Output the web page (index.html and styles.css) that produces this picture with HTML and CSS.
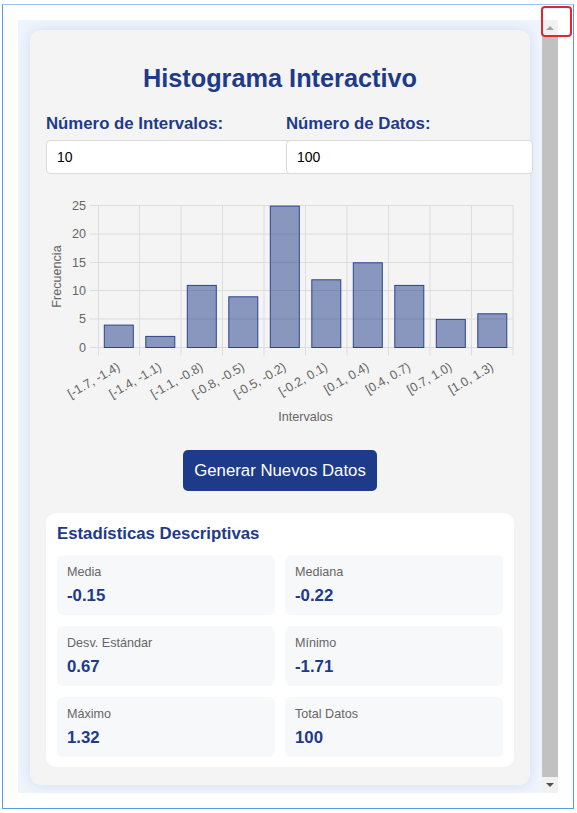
FILE: index.html
```html
<!DOCTYPE html>
<html lang="es">
<head>
<meta charset="utf-8">
<title>Histograma Interactivo</title>
<link rel="stylesheet" href="styles.css">
</head>
<body>
<div class="frame">
  <div class="viewport">
    <div class="content">
      <div class="card">
        <h1 class="title">Histograma Interactivo</h1>
        <div class="controls">
          <div class="field">
            <label class="field-label" for="bins">Número de Intervalos:</label>
            <input class="field-input" id="bins" type="text" value="10">
          </div>
          <div class="field">
            <label class="field-label" for="count">Número de Datos:</label>
            <input class="field-input" id="count" type="text" value="100">
          </div>
        </div>
        <svg class="chart" width="468" height="245" viewBox="0 0 468 245" xmlns="http://www.w3.org/2000/svg">
          <g stroke="#dcdcdc" stroke-width="1">
            <line x1="44" y1="16.5" x2="467" y2="16.5"/>
            <line x1="44" y1="45" x2="467" y2="45"/>
            <line x1="44" y1="73.5" x2="467" y2="73.5"/>
            <line x1="44" y1="101.5" x2="467" y2="101.5"/>
            <line x1="44" y1="130" x2="467" y2="130"/>
            <line x1="44" y1="158.5" x2="467" y2="158.5"/>
            <line x1="52.5" y1="16.5" x2="52.5" y2="166.5"/>
            <line x1="93.5" y1="16.5" x2="93.5" y2="166.5"/>
            <line x1="135" y1="16.5" x2="135" y2="166.5"/>
            <line x1="176.5" y1="16.5" x2="176.5" y2="166.5"/>
            <line x1="218" y1="16.5" x2="218" y2="166.5"/>
            <line x1="259.5" y1="16.5" x2="259.5" y2="166.5"/>
            <line x1="301" y1="16.5" x2="301" y2="166.5"/>
            <line x1="342.5" y1="16.5" x2="342.5" y2="166.5"/>
            <line x1="384" y1="16.5" x2="384" y2="166.5"/>
            <line x1="425.5" y1="16.5" x2="425.5" y2="166.5"/>
            <line x1="467" y1="16.5" x2="467" y2="166.5"/>
          </g>
          <g fill="rgba(30,58,138,0.5)" stroke="#2a4390" stroke-width="1">
            <rect x="58.3" y="136.1" width="29" height="22.4"/>
            <rect x="99.8" y="147.4" width="29" height="11.1"/>
            <rect x="141.3" y="96.4" width="29" height="62.1"/>
            <rect x="182.8" y="107.8" width="29" height="50.7"/>
            <rect x="224.3" y="17.1" width="29" height="141.4"/>
            <rect x="265.8" y="90.8" width="29" height="67.7"/>
            <rect x="307.3" y="73.8" width="29" height="84.7"/>
            <rect x="348.8" y="96.4" width="29" height="62.1"/>
            <rect x="390.3" y="130.4" width="29" height="28.1"/>
            <rect x="431.8" y="124.8" width="29" height="33.7"/>
          </g>
          <g class="tick" text-anchor="end">
            <text x="40" y="21">25</text>
            <text x="40" y="49.4">20</text>
            <text x="40" y="77.7">15</text>
            <text x="40" y="106">10</text>
            <text x="40" y="134.4">5</text>
            <text x="40" y="162.7">0</text>
          </g>
          <g class="tick" text-anchor="end">
            <text dy="0.35em" transform="translate(72.75 176.5) rotate(-30)">[-1.7, -1.4)</text>
            <text dy="0.35em" transform="translate(114.25 176.5) rotate(-30)">[-1.4, -1.1)</text>
            <text dy="0.35em" transform="translate(155.75 176.5) rotate(-30)">[-1.1, -0.8)</text>
            <text dy="0.35em" transform="translate(197.25 176.5) rotate(-30)">[-0.8, -0.5)</text>
            <text dy="0.35em" transform="translate(238.75 176.5) rotate(-30)">[-0.5, -0.2)</text>
            <text dy="0.35em" transform="translate(280.25 176.5) rotate(-30)">[-0.2, 0.1)</text>
            <text dy="0.35em" transform="translate(321.75 176.5) rotate(-30)">[0.1, 0.4)</text>
            <text dy="0.35em" transform="translate(363.25 176.5) rotate(-30)">[0.4, 0.7)</text>
            <text dy="0.35em" transform="translate(404.75 176.5) rotate(-30)">[0.7, 1.0)</text>
            <text dy="0.35em" transform="translate(446.25 176.5) rotate(-30)">[1.0, 1.3)</text>
          </g>
          <text class="tick" text-anchor="middle" dy="0.35em" transform="translate(11 87.5) rotate(-90)">Frecuencia</text>
          <text class="tick" text-anchor="middle" x="259.5" y="232">Intervalos</text>
        </svg>
        <div class="actions">
          <button class="btn" type="button">Generar Nuevos Datos</button>
        </div>
        <div class="stats">
          <h2 class="stats-title">Estadísticas Descriptivas</h2>
          <div class="stats-grid">
            <div class="stat"><div class="stat-label">Media</div><div class="stat-value">-0.15</div></div>
            <div class="stat"><div class="stat-label">Mediana</div><div class="stat-value">-0.22</div></div>
            <div class="stat"><div class="stat-label">Desv. Estándar</div><div class="stat-value">0.67</div></div>
            <div class="stat"><div class="stat-label">Mínimo</div><div class="stat-value">-1.71</div></div>
            <div class="stat"><div class="stat-label">Máximo</div><div class="stat-value">1.32</div></div>
            <div class="stat"><div class="stat-label">Total Datos</div><div class="stat-value">100</div></div>
          </div>
        </div>
      </div>
    </div>
    <div class="scrollbar">
      <div class="sb-btn"><span class="arrow-up"></span></div>
      <div class="sb-thumb"></div>
      <div class="sb-btn"><span class="arrow-down"></span></div>
    </div>
  </div>
</div>
<div class="highlight"></div>
</body>
</html>
```
FILE: styles.css
```css
* { box-sizing: border-box; }
html, body { margin: 0; padding: 0; background: #ffffff; }
body {
  font-family: "Liberation Sans", Arial, sans-serif;
  width: 577px;
  height: 813px;
  overflow: hidden;
  position: relative;
}
.frame {
  margin: 4px 0 0 2px;
  width: 572px;
  height: 805px;
  border: 1px solid #5b9be6;
  border-top-color: #9fc4f0;
  padding: 15px;
}
.viewport {
  display: flex;
  width: 540px;
  height: 773px;
  background: #eef4fc;
  overflow: hidden;
}
.content {
  width: 524px;
  flex: none;
}
.card {
  margin: 10px 12px 8px;
  width: 500px;
  height: 755px;
  background: #f4f4f4;
  border-radius: 10px;
  box-shadow: 0 0 12px rgba(30, 58, 138, 0.12);
  padding: 34px 16px 17px;
}
.title {
  margin: 0;
  text-align: center;
  font-size: 25.3px;
  line-height: 29px;
  font-weight: bold;
  color: #1e3a8a;
}
.controls {
  margin-top: 21px;
  display: grid;
  grid-template-columns: 225px 225px;
  column-gap: 15px;
}
.field { display: flex; flex-direction: column; }
.field-label {
  font-size: 16.8px;
  line-height: 19px;
  font-weight: bold;
  color: #1e3a8a;
  margin-bottom: 7px;
}
.field-input {
  box-sizing: content-box;
  width: 100%;
  height: 16px;
  padding: 8px 10px;
  border: 1px solid #dadada;
  border-radius: 4px;
  background: #ffffff;
  font-family: "Liberation Sans", Arial, sans-serif;
  font-size: 14px;
  color: #000000;
  margin: 0;
  outline: none;
}
.chart {
  display: block;
  margin-top: 15px;
  overflow: visible;
}
.tick {
  font-family: "Liberation Sans", Arial, sans-serif;
  font-size: 12.6px;
  fill: #666666;
}
.actions {
  margin-top: 16px;
  display: flex;
  justify-content: center;
}
.btn {
  height: 41px;
  padding: 0 11px;
  border: none;
  border-radius: 5px;
  background: #1e3a8a;
  color: #ffffff;
  font-family: "Liberation Sans", Arial, sans-serif;
  font-size: 16.8px;
}
.stats {
  margin-top: 22px;
  background: #ffffff;
  border-radius: 10px;
  padding: 11px 11px 10px;
}
.stats-title {
  margin: 0;
  font-size: 16.8px;
  line-height: 19px;
  font-weight: bold;
  color: #1e3a8a;
}
.stats-grid {
  margin-top: 12px;
  display: grid;
  grid-template-columns: 1fr 1fr;
  column-gap: 10px;
  row-gap: 11px;
}
.stat {
  height: 60px;
  background: #f7f8fa;
  border-radius: 6px;
  padding: 10px;
}
.stat-label {
  font-size: 12.6px;
  line-height: 14.5px;
  color: #666666;
}
.stat-value {
  margin-top: 6px;
  font-size: 16.8px;
  line-height: 19px;
  font-weight: bold;
  color: #1e3a8a;
}
.scrollbar {
  width: 16px;
  flex: none;
  display: flex;
  flex-direction: column;
  background: #f1f1f1;
}
.sb-btn {
  height: 16px;
  flex: none;
  display: flex;
  align-items: center;
  justify-content: center;
}
.sb-thumb {
  flex: 1;
  background: #c1c1c1;
}
.arrow-up {
  width: 0; height: 0;
  border-left: 4px solid transparent;
  border-right: 4px solid transparent;
  border-bottom: 4px solid #a3a3a3;
}
.arrow-down {
  width: 0; height: 0;
  border-left: 4px solid transparent;
  border-right: 4px solid transparent;
  border-top: 4px solid #505050;
}
.highlight {
  position: absolute;
  left: 541px;
  top: 6px;
  width: 31px;
  height: 31px;
  border: 2px solid #e3262b;
  border-radius: 4px;
}
```
